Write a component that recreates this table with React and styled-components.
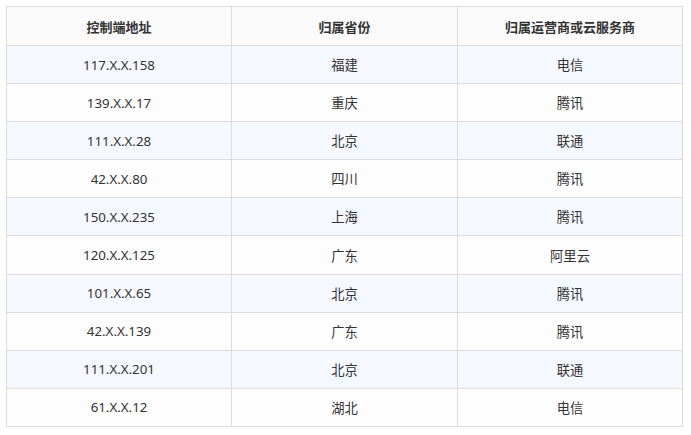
import React from "react";
import styled, { createGlobalStyle } from "styled-components";

const GlobalStyle = createGlobalStyle`
  body {
    margin: 0;
    background: #ffffff;
    font-family: "Noto Sans", "Noto Sans CJK SC", sans-serif;
  }
`;

const rows = [
  ["117.X.X.158", "福建", "电信"],
  ["139.X.X.17", "重庆", "腾讯"],
  ["111.X.X.28", "北京", "联通"],
  ["42.X.X.80", "四川", "腾讯"],
  ["150.X.X.235", "上海", "腾讯"],
  ["120.X.X.125", "广东", "阿里云"],
  ["101.X.X.65", "北京", "腾讯"],
  ["42.X.X.139", "广东", "腾讯"],
  ["111.X.X.201", "北京", "联通"],
  ["61.X.X.12", "湖北", "电信"],
];

export default function App() {
  return (
    <>
      <GlobalStyle />
      <Wrap>
        <Table>
          <colgroup>
            <col style={{ width: 225 }} />
            <col style={{ width: 226 }} />
            <col />
          </colgroup>
          <thead>
            <tr>
              <Th>控制端地址</Th>
              <Th>归属省份</Th>
              <Th>归属运营商或云服务商</Th>
            </tr>
          </thead>
          <tbody>
            {rows.map((r, i) => (
              <Row key={i} $striped={i % 2 === 0}>
                {r.map((c, j) => (
                  <Td key={j}>{c}</Td>
                ))}
              </Row>
            ))}
          </tbody>
        </Table>
      </Wrap>
    </>
  );
}

const Wrap = styled.div`
  padding: 6px 8px 0 6px;
`;

const Table = styled.table`
  width: 677px;
  border-collapse: collapse;
  table-layout: fixed;
  color: #333333;
  font-size: 13px;
`;

const Th = styled.th`
  height: 38px;
  padding: 0 8px;
  background: #fafafa;
  border: 1px solid #dcdcdc;
  font-weight: 700;
  text-align: center;
  font-family: "Noto Sans CJK SC", sans-serif;
`;

const Row = styled.tr`
  background: ${(p) => (p.$striped ? "#f5f9ff" : "#fdfdfd")};
`;

const Td = styled.td`
  height: 37.1px;
  padding: 0 8px;
  border: 1px solid #dcdcdc;
  text-align: center;
  font-size: 13.3px;
  font-family: "Noto Sans", "Noto Sans CJK SC", sans-serif;
`;
